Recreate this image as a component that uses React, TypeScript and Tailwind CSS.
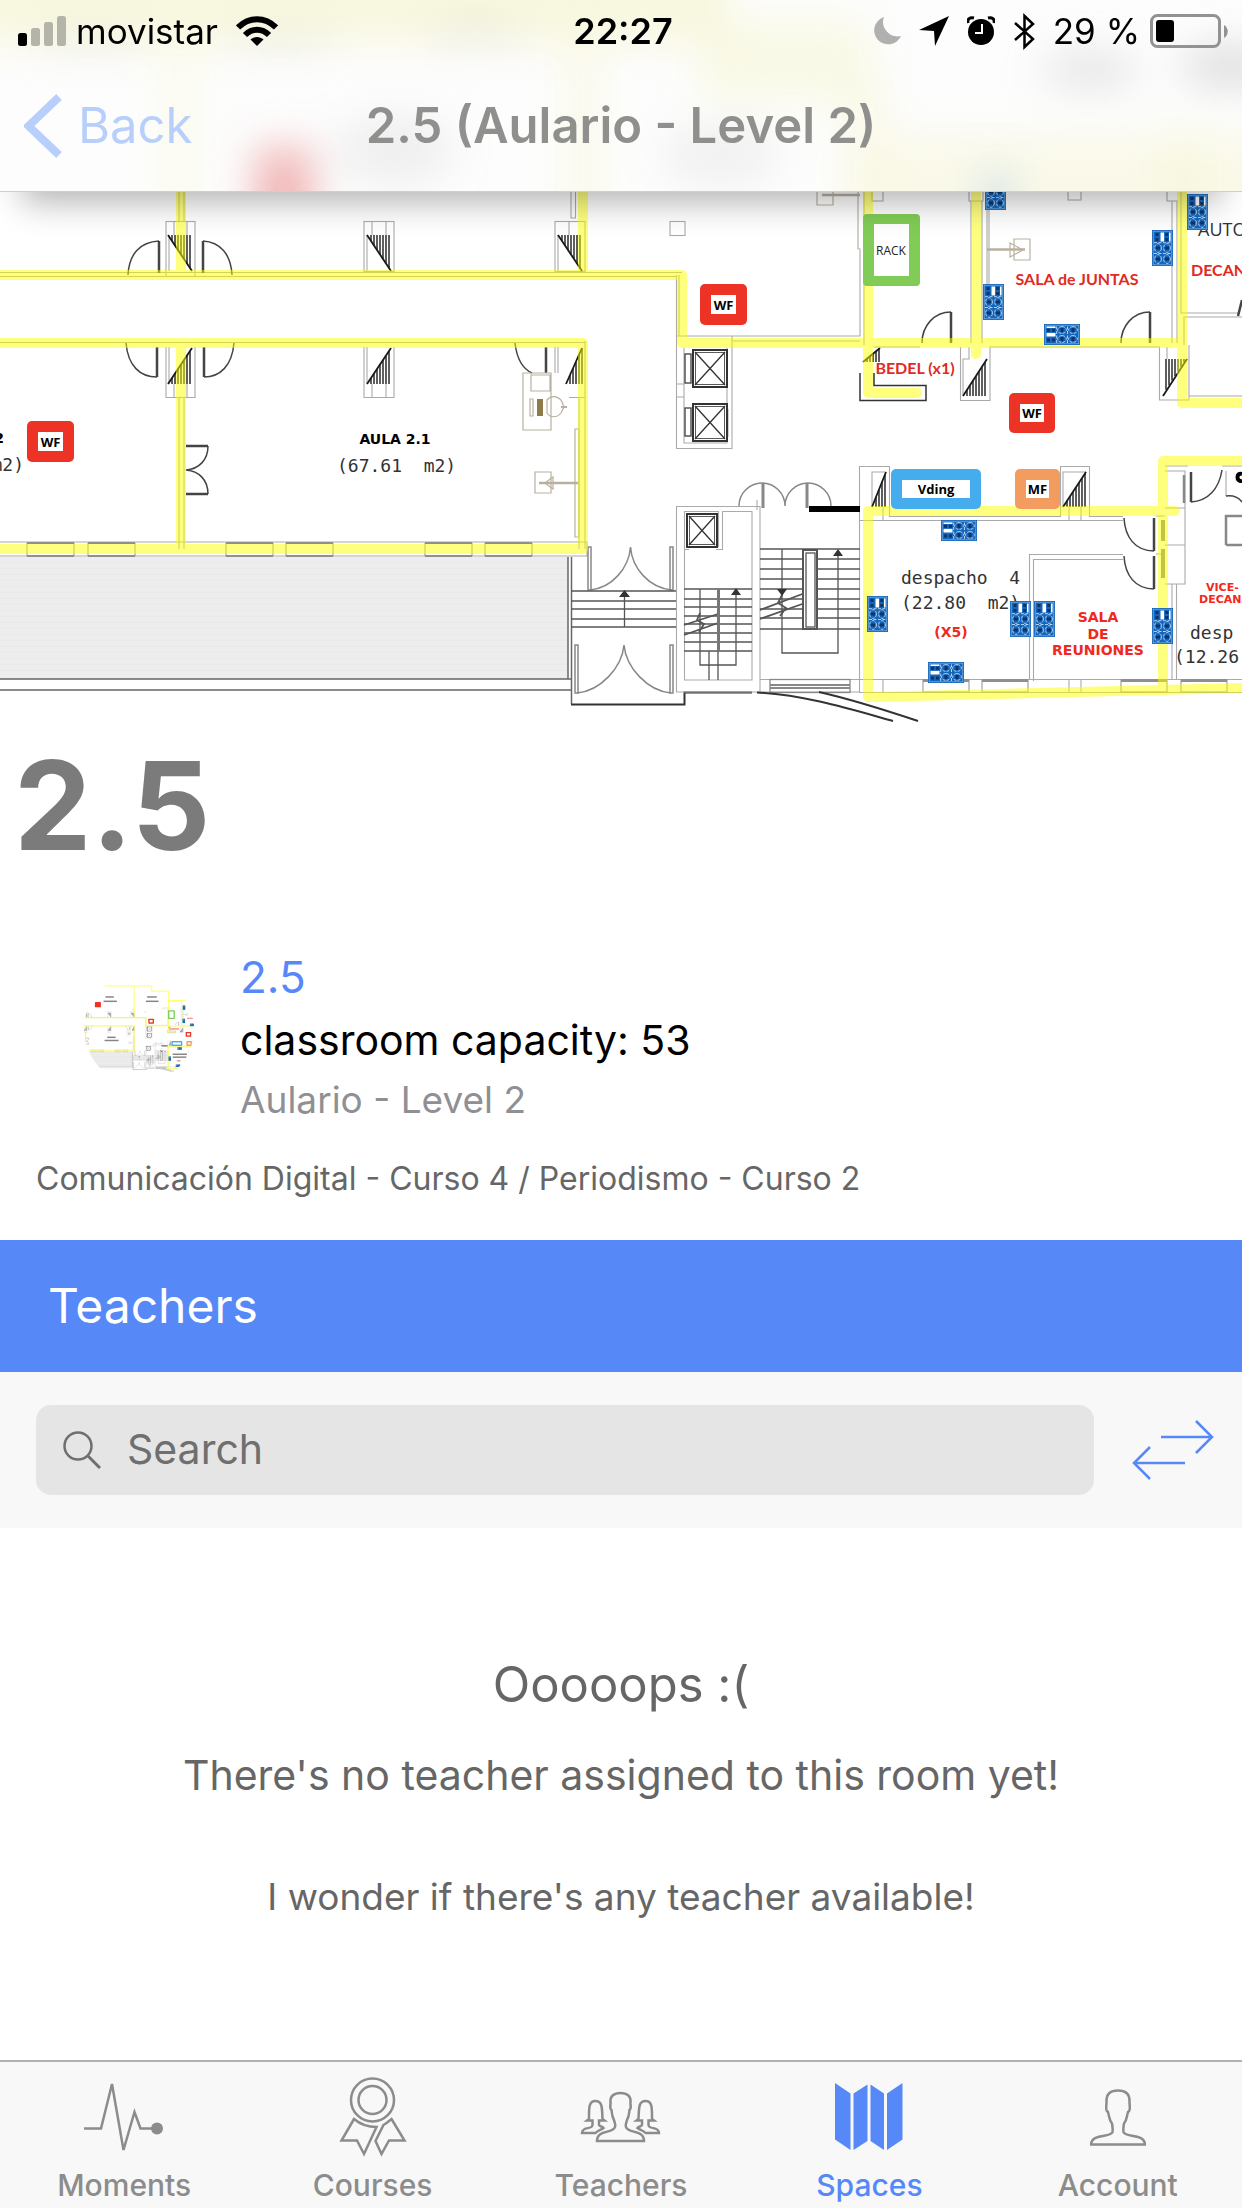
import type { ReactNode } from "react";

const YELLOW = "#ffff00";
const RED = "#ed3326";

type Point = { x: number; y: number };

/* Shaded triangular column; `dir` says where the stripes hang from and which way the diagonal runs. */
function Hatch({ x, y, w, h, dir }: Point & { w: number; h: number; dir: "top-right" | "bottom-right" | "top-left" }) {
  const steps = [4, 7, 10, 13, 16, 19, 22, 25].filter((s) => s <= w);
  return (
    <g stroke="#1a1a1a">
      {steps.map((s) => {
        const r = s / w;
        if (dir === "top-right") return <path key={s} strokeWidth="1.4" d={`M${x + s} ${y}V${y + h * r}`} />;
        if (dir === "bottom-right") return <path key={s} strokeWidth="1.4" d={`M${x + s} ${y + h}V${y + h * (1 - r)}`} />;
        return <path key={s} strokeWidth="1.4" d={`M${x + s - 1} ${y}V${y + h * (1 - r)}`} />;
      })}
      <path strokeWidth="1.8" d={dir === "top-right" ? `M${x} ${y}L${x + w} ${y + h}` : `M${x} ${y + h}L${x + w} ${y}`} />
    </g>
  );
}

/* Network socket cluster, 21 by 36 when upright. */
function Sockets({ x, y, flat = false }: Point & { flat?: boolean }) {
  return (
    <g transform={flat ? `translate(${x} ${y + 21}) rotate(-90)` : `translate(${x} ${y})`}>
      <rect width="21" height="36" fill="#1565ba" />
      <rect x="1.200" y="1.200" width="18.600" height="33.600" fill="none" stroke="#7fb4e6" strokeWidth="0.700" />
      <rect x="8.500" y="2.500" width="3.600" height="9" fill="#fff" />
      <rect x="17" y="2.500" width="1.600" height="9" fill="#fff" />
      <g fill="#0a3568">
        <rect x="3.500" y="3" width="3" height="3" />
        <rect x="3.500" y="8" width="3" height="3" />
        <rect x="13.200" y="3" width="3" height="3" />
        <rect x="13.200" y="8" width="3" height="3" />
        <rect x="4" y="16.500" width="4" height="3" />
        <rect x="13" y="16.500" width="4" height="3" />
        <rect x="4" y="27.500" width="4" height="3" />
        <rect x="13" y="27.500" width="4" height="3" />
      </g>
      <g fill="none" stroke="#c4def5" strokeWidth="0.900">
        <ellipse cx="6" cy="18" rx="3.400" ry="4.400" strokeDasharray="3 1.200" />
        <ellipse cx="15" cy="18" rx="3.400" ry="4.400" strokeDasharray="3 1.200" />
        <ellipse cx="6" cy="29" rx="3.400" ry="4.400" strokeDasharray="3 1.200" />
        <ellipse cx="15" cy="29" rx="3.400" ry="4.400" strokeDasharray="3 1.200" />
        <path d="M2 12.700H19M2 23.500H19" strokeDasharray="3 1.500" />
      </g>
    </g>
  );
}

function Tag({ x, y, w, h, color, label, labels }: Point & { w: number; h: number; color: string; label: string; labels: boolean }) {
  return (
    <g>
      <rect x={x} y={y} width={w} height={h} rx="5" fill={color} />
      <rect x={x + 11} y={y + 11} width={w - 22} height={h - 22} fill="#fff" />
      {labels && (
        <text x={x + w / 2} y={y + h / 2 + 5} textAnchor="middle" className="fill-black font-['Open_Sans',sans-serif] text-[13px] font-bold">
          {label}
        </text>
      )}
    </g>
  );
}

function Lift({ x, y, w, h }: Point & { w: number; h: number }) {
  return (
    <g fill="none" stroke="#333">
      <rect x={x} y={y} width={w} height={h} strokeWidth="2" />
      <rect x={x + 2.5} y={y + 2.5} width={w - 5} height={h - 5} strokeWidth="0.8" />
      <path strokeWidth="1.3" d={`M${x + 2} ${y + 2}L${x + w - 2} ${y + h - 2}M${x + w - 2} ${y + 2}L${x + 2} ${y + h - 2}`} />
    </g>
  );
}

const stair = (x1: number, x2: number, ys: number[]) => ys.map((y) => `M${x1} ${y}H${x2}`).join("");

function FloorPlan({ viewBox, className, labels = true }: { viewBox: string; className: string; labels?: boolean }) {
  return (
    <svg viewBox={viewBox} className={className} role="img" aria-label="Floor plan">
      {/* terrace */}
      <rect x="0" y="557" width="568" height="122" fill="#ededed" />
      <path d={stair(0, 568, [562, 568, 574, 580, 586, 592, 598, 604, 610, 616, 622, 628, 634, 640, 646, 652, 658, 664, 670])} stroke="#e8e8e8" />
      <g fill="none" stroke="#666" strokeWidth="1.5">
        <path d="M568 557V679M571.500 557V704M0 679H571M0 690H571" />
        <path d="M571 704.500H684.500V692.500H752" stroke="#333" strokeWidth="2" />
      </g>

      {/* walls */}
      <g fill="none" stroke="#aaa" strokeWidth="1.1">
        <path d="M0 272.500H682M0 276.500H676M179 12V221M184 12V221M0 342.500H585M179 397V549M184 397V549M579 397V549M585 341V549M0 542H587V556H0" />
        <rect x="166" y="221.500" width="29" height="55" />
        <path d="M174 221V235M187 221V235M169 235V271M372 221V235M386 221V235M367 235V271M569 221V235M558 235V271" />
        <rect x="364" y="221.500" width="30" height="50" />
        <rect x="555" y="221.500" width="30" height="50" />
        <path d="M166 347V397.500H195V347M169 347V384M174 384V397M187 384V397M364 347V397.500H394V347M367 347V384M372 384V397M386 384V397M555 347V373M558 347V373M569 397.500H585" />
        <path d="M575.500 192V218H571V192M676.500 275V448.500H732V336M676 336H860V250M679 275V336M732 341H860M676 384H684M676 397H684M684 348V443H727M727 348V443M732 353V381M728 409V437" />
        <rect x="670" y="221.500" width="15" height="14" />
        <path d="M864 192V345M872 192V201H883V192M969 192V201H983V192M971 201V343M982 201V343M1068 192V200H1081V192M1167 192V201H1178M1172 201V343M1177 201V343M920 347H874M960.500 347V400.500H990V347H1159.500V400H1189V345M969 347V359H963V396M1167 347V359M1181 192V313H1238M1242 317H1184V345M1189 396H1242M989 200V284" />
        <path d="M859.500 692V466.500H889.500V516.500H1060.500V466.500H1089.500V516.500H1123M859 520.500H1123M872 507V472H886M883 507V520M1063 507V472H1086M1069 507V520M1081 507V520M1029.500 679V554.500H1123M1033.500 681V559.500H1123M859 679.500H1242M859 692.500H1242M883 679V692M1069 679V692M1081 679V692M1156 516H1165M1156 554H1165" />
        <path d="M1165 466H1188M1165 471H1185V584H1165M1165 508H1185M1165 545H1185M1172 584V679M1176.500 584V679M1222 466H1242M1226 471V496" />
        <path d="M676.500 692V506.500H760V692ZM684.500 549V680H752V511.500H722.500V549.500H716M684 549.500H689M684.500 549V511.500H718.500V547M760 692H860M760 679.500H860M757 500V510" />
      </g>
      <g fill="none" stroke="#888" strokeWidth="1.3">
        <path d="M1226 545H1242M1226 545V516H1242M1184 475V503" strokeWidth="2.500" />
        <path d="M1163 520V541M1163 549V578" strokeWidth="4" />
        <rect x="770" y="679.500" width="80" height="13" />
        <path d="M770 685H850M770 688H850" strokeWidth="2" />
      </g>

      {/* windows */}
      {[27, 88, 226, 286, 425, 485].map((x) => (
        <g key={x} stroke="#8f8f8f" strokeWidth="2">
          <path d={`M${x} 543H${x + 47}M${x} 556H${x + 47}`} />
          <path d={`M${x} 543V556M${x + 47} 543V556`} strokeWidth="1" />
        </g>
      ))}
      {[923, 982, 1121, 1181].map((x) => (
        <g key={x} fill="none" stroke="#8f8f8f">
          <rect x={x} y="680" width="46" height="12" />
          <path d={`M${x} 680.500H${x + 46}`} strokeWidth="3" />
        </g>
      ))}

      {/* doors */}
      <g fill="none" stroke="#444" strokeWidth="1.500">
        <path d="M128 275C129 254 140 242 159 241M232 275C231 254 220 242 203 241M126 343C128 366 140 377 157 377M234 343C232 366 220 377 204 377M515 343C517 360 523 369 532 373" />
        <path d="M159 241V273M203 241V273M157 347V377M204 347V377M546 347V373" strokeWidth="2.500" />
        <path d="M208 446C208 460 199 469 186 470C199 471 208 480 208 494M922 343C922 326 934 312 951 312M1121 343C1121 326 1133 312 1150 312M1124 518C1125 537 1135 551 1154 551M1124 556C1125 575 1135 589 1154 589M1222 470C1219 489 1208 501 1191 502M1226 496C1234 495 1239 498 1242 502" />
        <path d="M186 446H208M186 494H208M951 312V343M1150 312V343M1154 518V551M1154 556V589M1191 472V502M1238 316L1242 300" strokeWidth="2.500" />
        <g stroke="#888">
          <path d="M739 506A23 23 0 0 1 785 506A23 23 0 0 1 831 506" />
          <path d="M763 483V508M807 483V508" strokeWidth="3" />
          <path d="M590 590C612 588 629 568 630.500 547C632 568 649 588 672 590M577 693C600 691 622 668 624 645C626 668 648 691 671 693" />
          <path d="M588 547H591V590H588ZM670 547H673V590H670ZM575 645H578V693H575ZM670 645H673V693H670Z" />
        </g>
      </g>

      {/* stairs */}
      <g fill="none" stroke="#555" strokeWidth="1.300">
        <path d={stair(571, 676, [591, 601, 609, 619, 627])} />
        <path d={stair(684, 752, [589, 599, 607, 616, 624, 633, 642, 651])} />
        <path d={stair(760, 860, [549, 559, 569, 579, 589, 599, 609, 618, 629])} />
        <path d="M709 651V680M718 651V680M624.500 627V594M700 589V665H736V594M782 549V653H838V554" />
        <path d="M684 625L718 614M684 635L718 623M760 610L805 593M760 619L805 603M700 613L697 620L704 624L699 632M782 595L778 603L786 608L780 616" strokeWidth="1.800" />
        <rect x="803" y="550" width="14" height="79" fill="#fff" strokeWidth="2" />
        <rect x="806" y="553" width="9" height="74" />
        <path d="M718.500 589V651" stroke="#777" strokeWidth="3" />
      </g>
      <path d="M624.500 590L619 597H630ZM736 588L731 595H741ZM838 549L833 556H843ZM782 596L777 589H787Z" fill="#333" />
      <rect x="809" y="506" width="51" height="6" fill="#000" />
      <g fill="none" stroke="#333" strokeWidth="2">
        <path d="M757 692.500C805 695 850 709 893 721M819 692C850 699 885 710 918 721" />
      </g>

      <Lift x={693} y={350} w={34} h={37} />
      <Lift x={693} y={404} w={34} h={37} />
      <Lift x={687} y={514} w={30} h={33} />
      <path d="M685 354H691V383H685ZM685 408H691V436H685Z" fill="none" stroke="#555" strokeWidth="1.500" />

      {/* furniture */}
      <g fill="none" stroke="#b9b1a0" strokeWidth="1.200">
        <path d="M523 373H551V430H523ZM531 375H550V391H531ZM530 399H533V416H530ZM575 429H579V537H575ZM535 472H551V493H535ZM1014 239H1030V260H1014ZM1010 243V257L1023 250ZM817 192V205H833V192M858 192V249H861M987 200V284" />
        <path d="M539 483H578M987 249.500H1025M822 195H860" strokeWidth="2.500" />
        <path d="M545 483L553 477V489ZM547 400C552 394 560 397 562 402L564 407L561 413C557 418 550 418 547 413Z" />
        <path d="M561 407H567" strokeWidth="2" />
      </g>
      <rect x="537" y="399" width="6" height="17" fill="#8f7a4c" />

      <Hatch x={168} y={235} w={24} h={36} dir="top-right" />
      <Hatch x={367} y={235} w={24} h={36} dir="top-right" />
      <Hatch x={558} y={235} w={24} h={36} dir="top-right" />
      <Hatch x={168} y={348} w={24} h={36} dir="bottom-right" />
      <Hatch x={367} y={348} w={24} h={36} dir="bottom-right" />
      <Hatch x={566} y={348} w={16} h={36} dir="bottom-right" />
      <Hatch x={963} y={359} w={24} h={37} dir="bottom-right" />
      <Hatch x={1163} y={359} w={24} h={37} dir="top-left" />
      <Hatch x={863} y={348} w={17} h={14} dir="bottom-right" />
      <Hatch x={872} y={472} w={14} h={35} dir="bottom-right" />
      <Hatch x={1063} y={472} w={23} h={35} dir="bottom-right" />

      {/* highlighted cable routes */}
      <g fill="none" stroke={YELLOW} strokeWidth="10" strokeLinejoin="round" strokeLinecap="round" opacity="0.5">
        <path d="M-40 12H728V55H868V135H1282M181 12V275M583 12V275M-40 275H682V343H1182M868 55V393H917M976 135V354M1182 135V403H1282" />
        <path d="M-40 343H583V549H-40M181 343V549" />
        <path d="M868 511H1175M868 511V697L1282 687M1163 690V461H1282" />
      </g>
      <path d="M860 373V400.500H926V385.500H874V373" fill="none" stroke="#333" strokeWidth="1.500" />

      {/* upper rooms */}
      <rect x="258" y="146" width="50" height="44" rx="5" fill={RED} />

      <Tag x={27} y={421} w={47} h={41} color={RED} label="WF" labels={labels} />
      <Tag x={700} y={284} w={47} h={41} color={RED} label="WF" labels={labels} />
      <Tag x={1009} y={393} w={46} h={40} color={RED} label="WF" labels={labels} />
      <Tag x={891} y={469} w={90} h={40} color="#45adee" label="Vding" labels={labels} />
      <Tag x={1015} y={469} w={45} h={40} color="#f39c60" label="MF" labels={labels} />
      <rect x="863" y="214" width="57" height="72" rx="4" fill="#81cc56" />
      <rect x="874" y="224" width="35" height="52" fill="#fff" />

      {labels ? (
        <g>
          <g className="fill-[#333] font-['DejaVu_Sans_Mono',monospace] text-[18px]">
            <text x="337" y="472">{"(67.61\u00a0\u00a0m2)"}</text>
            <text x="24" y="471" textAnchor="end">{"m2)"}</text>
            <text x="901" y="584">{"despacho\u00a0\u00a04"}</text>
            <text x="901" y="609">{"(22.80\u00a0\u00a0m2)"}</text>
            <text x="1190" y="639">desp</text>
            <text x="1174" y="663">(12.26</text>
          </g>
          <g className="fill-black font-['DejaVu_Sans',sans-serif] text-[14px] font-bold">
            <text x="395" y="444" textAnchor="middle">AULA 2.1</text>
            <text x="4" y="443" textAnchor="end">2</text>
          </g>
          <text x="891" y="255" textAnchor="middle" className="fill-[#222] font-['Open_Sans',sans-serif] text-[12px]">RACK</text>
          <text x="1198" y="236" className="fill-[#333] font-['Open_Sans',sans-serif] text-[18px]">AUTO</text>
          <g className="fill-[#e12a22] font-[Lato,sans-serif] text-[16px] font-bold">
            <text x="1077" y="285" textAnchor="middle">SALA de JUNTAS</text>
            <text x="915" y="374" textAnchor="middle">BEDEL (x1)</text>
            <text x="1191" y="276">DECANO</text>
          </g>
          <g className="fill-[#f0281e] font-['DejaVu_Sans',sans-serif] text-[14px] font-bold" textAnchor="middle">
            <text x="951" y="637">(X5)</text>
            <text x="1098" y="622">SALA</text>
            <text x="1098" y="639">DE</text>
            <text x="1098" y="655">REUNIONES</text>
          </g>
          <g className="fill-[#f0281e] font-['DejaVu_Sans',sans-serif] text-[11px] font-bold">
            <text x="1206" y="591">VICE-</text>
            <text x="1199" y="603">DECANA</text>
          </g>
        </g>
      ) : (
        <g fill="#333" opacity="0.600">
          <rect x="360" y="432" width="70" height="12" />
          <rect x="338" y="458" width="116" height="12" />
          <rect x="902" y="572" width="118" height="12" />
          <rect x="902" y="596" width="118" height="12" />
          <rect x="345" y="98" width="70" height="12" />
          <rect x="330" y="134" width="110" height="12" />
          <rect x="690" y="98" width="80" height="12" />
          <rect x="680" y="134" width="105" height="12" />
          <rect x="1020" y="276" width="116" height="9" fill={RED} />
          <rect x="876" y="363" width="77" height="11" fill={RED} />
          <rect x="936" y="627" width="30" height="10" fill={RED} />
        </g>
      )}

      <Sockets x={985} y={174} />
      <Sockets x={983} y={284} />
      <Sockets x={1152} y={230} />
      <Sockets x={1187} y={194} />
      <Sockets x={1044} y={324} flat />
      <Sockets x={867} y={596} />
      <Sockets x={1010} y={601} />
      <Sockets x={1034} y={601} />
      <Sockets x={1152} y={608} />
      <Sockets x={941} y={520} flat />
      <Sockets x={928} y={662} flat />
      <path d="M1242 474C1236 472 1236 482 1242 481" fill="none" stroke="#000" strokeWidth="4" />
    </svg>
  );
}

/* Frosted glass tint of the navigation bar. */
function FrostedBackdrop() {
  return (
    <svg viewBox="0 0 1242 191" preserveAspectRatio="none" className="absolute inset-0 -z-10 size-full" aria-hidden="true">
      <defs>
        <filter id="frost" filterUnits="userSpaceOnUse" x="-150" y="-150" width="1542" height="500" colorInterpolationFilters="sRGB">
          <feGaussianBlur stdDeviation="20" />
        </filter>
      </defs>
      <rect width="1242" height="191" fill="#fdfdfd" />
      <g filter="url(#frost)">
        <g fill="#f6f5d0">
          <rect x="-80" y="-80" width="808" height="122" opacity="0.650" />
          <rect x="165" y="20" width="32" height="240" opacity="0.350" />
          <rect x="567" y="20" width="32" height="240" opacity="0.450" />
          <rect x="700" y="20" width="170" height="80" opacity="0.500" />
          <rect x="845" y="80" width="40" height="180" opacity="0.450" />
          <rect x="870" y="135" width="450" height="110" opacity="0.450" />
          <rect x="1165" y="130" width="40" height="120" opacity="0.400" />
        </g>
        <g fill="#999">
          <ellipse cx="90" cy="40" rx="55" ry="12" opacity="0.120" />
          <ellipse cx="280" cy="40" rx="55" ry="12" opacity="0.120" />
          <ellipse cx="475" cy="30" rx="50" ry="14" opacity="0.120" />
          <ellipse cx="395" cy="150" rx="60" ry="36" opacity="0.140" />
          <ellipse cx="720" cy="155" rx="60" ry="30" opacity="0.130" />
          <ellipse cx="1090" cy="70" rx="50" ry="16" opacity="0.280" />
          <ellipse cx="1230" cy="66" rx="50" ry="20" opacity="0.320" />
        </g>
        <rect x="256" y="148" width="56" height="90" fill="#e98f8f" opacity="0.660" />
        <rect x="985" y="172" width="24" height="60" fill="#8dbbe0" opacity="0.450" />
      </g>
    </svg>
  );
}

function StatusBar() {
  return (
    <div className="grid h-[62px] grid-cols-[1fr_auto_1fr] items-center pr-[14px] pl-[18px] text-[35px] text-black">
      <div className="flex items-center gap-[10px]">
        <svg viewBox="18 15 48 30" className="h-[30px] w-12" aria-label="Signal">
          <rect x="18" y="32" width="9" height="13" rx="2.500" />
          <g fill="#b4b5a8">
            <rect x="31" y="27" width="9" height="18" rx="2.500" />
            <rect x="44" y="21" width="9" height="24" rx="2.500" />
            <rect x="57" y="15" width="9" height="30" rx="2.500" />
          </g>
        </svg>
        <span>movistar</span>
        <svg viewBox="237 15 42 30" className="ml-2 h-[30px] w-[42px]" aria-label="Wi-Fi">
          <g fill="none" stroke="#000" strokeWidth="6">
            <path d="M239 26.500C250 15.500 266 15.500 277 26.500" />
            <path d="M246 34C253 27 263 27 270 34" />
          </g>
          <path d="M251.500 38.500C255 35 261 35 264.500 38.500L258 45Z" />
        </svg>
      </div>
      <span className="text-4xl font-semibold">22:27</span>
      <div className="flex items-center justify-end gap-[18px]">
        <svg viewBox="873 16 27 28" className="h-7 w-[27px]" aria-label="Do not disturb">
          <path d="M883 16A14 14 0 1 0 900 35A14.500 14.500 0 0 1 883 16Z" fill="#b0b0b0" />
        </svg>
        <svg viewBox="918 16 30 30" className="h-[30px] w-[30px]" aria-label="Location">
          <path d="M948 16L934 46L933 31L918 30Z" />
        </svg>
        <svg viewBox="968 15 28 30" className="h-[30px] w-7" aria-label="Alarm">
          <circle cx="982" cy="31" r="13" />
          <path d="M983 23V32H976" fill="none" stroke="#fff" strokeWidth="2" />
          <path d="M969 22C968 18 971 16 975 17M995 22C996 18 993 16 989 17" fill="none" stroke="#000" strokeWidth="3" />
        </svg>
        <svg viewBox="1013 12 22 37" className="h-[37px] w-[22px]" aria-label="Bluetooth">
          <path d="M1015 22L1033 38L1024.500 46V15L1033 23L1015 39" fill="none" stroke="#000" strokeWidth="2.500" />
        </svg>
        <div className="flex items-center gap-[10px]">
          <span>29 %</span>
          <svg viewBox="1149 13 78 34" className="h-[34px] w-[78px]" aria-label="Battery">
            <rect x="1150.500" y="14.500" width="68" height="31" rx="6" fill="none" stroke="#929292" strokeWidth="3" />
            <rect x="1155" y="19" width="18" height="22" rx="3" />
            <path d="M1223 24C1228 27 1228 34 1223 37Z" fill="#929292" />
          </svg>
        </div>
      </div>
    </div>
  );
}

const personHalf = "M1090 94.500C1091 83 1110 88 1111.500 82C1112 78 1111.500 77 1111 73.500C1108 70 1108.500 67 1107 62C1104 61 1105.500 56 1105.500 52C1105 43.500 1110 40.500 1117 40.500";

function Person() {
  return (
    <g fill="none" stroke="currentColor" strokeWidth="2.500">
      <path d={personHalf} />
      <path d={personHalf} transform="translate(2234 0) scale(-1 1)" />
      <path d="M1089 94.500H1145" />
    </g>
  );
}

const womanPath =
  "M589 69C589 58 588.500 51 595.500 51C602.500 51 602 58 602.500 69L604.500 70.500H599V75C600 77 602 76 603.500 78C601 80 598 80 595.500 83H582C582 76 592 80 592.500 75V70.500H587Z";

const tabs: { name: string; active?: boolean; icon: ReactNode }[] = [
  {
    name: "Moments",
    icon: (
      <svg viewBox="84 27 80 80" className="size-20" aria-hidden="true">
        <path d="M84 78.500H101L112 34L123.500 100L134.500 62L140.500 78.500H152" fill="none" stroke="currentColor" strokeWidth="2.500" />
        <circle cx="157" cy="78.500" r="6" fill="currentColor" />
      </svg>
    ),
  },
  {
    name: "Courses",
    icon: (
      <svg viewBox="332 27 80 80" className="size-20" aria-hidden="true">
        <g fill="none" stroke="currentColor" strokeWidth="2.500">
          <circle cx="371.500" cy="50" r="21.500" />
          <circle cx="371.500" cy="50" r="14" />
          <path d="M353 69L340.500 90.500H356L363 104L375.500 77C366 77 359 74 353 69ZM390.500 69L403.500 90.500H388L380.500 104L374.500 91L382.500 75C386 73 388 71 390.500 69Z" />
        </g>
      </svg>
    ),
  },
  {
    name: "Teachers",
    icon: (
      <svg viewBox="580 27 82 80" className="h-20 w-[82px]" aria-hidden="true">
        <g fill="none" stroke="currentColor" strokeWidth="2.500">
          <path d={womanPath} />
          <path d={womanPath} transform="translate(1241 0) scale(-1 1)" />
        </g>
        <g className="fill-[#f8f8f8]" stroke="currentColor" strokeWidth="2.500">
          <path d="M597 91C597 79 613 84 615 77C616 74 614.500 73 614 70C612 67 612 64 611.500 60C609 58 611 55 610.500 52C610 46 614 43 620.500 43C627 43 631 46 630.500 52C630 55 632 58 629.500 60C629 64 629 67 627 70C626.500 73 625 74 626 77C628 84 644 79 644 91Z" />
        </g>
      </svg>
    ),
  },
  {
    name: "Spaces",
    active: true,
    icon: (
      <svg viewBox="829 27 80 80" className="size-20" aria-hidden="true">
        <path
          fill="currentColor"
          d="M835 33L850.500 43.500V100L835 89.500ZM853.500 43.500L867.500 34.500V91L853.500 100ZM870.500 34.500L884 43.500V100L870.500 91ZM887 43.500L902.500 33V89.500L887 100Z"
        />
      </svg>
    ),
  },
  {
    name: "Account",
    icon: (
      <svg viewBox="1077 27 80 80" className="size-20" aria-hidden="true">
        <Person />
      </svg>
    ),
  },
];

export default function App() {
  return (
    <div className="flex min-h-screen flex-col bg-white font-[Inter,sans-serif] text-[#666]">
      <header className="sticky top-0 isolate z-10 h-48 border-b border-[#cfcfcb] shadow-[0_32px_32px_-22px_rgba(0,0,0,0.3)]">
        <FrostedBackdrop />
        <StatusBar />
        <div className="grid grid-cols-[1fr_auto_1fr] items-center px-6 pt-[26px] text-[49px] leading-[76px]">
          <button type="button" className="flex items-center gap-4 justify-self-start text-[#b9cffb]">
            <svg viewBox="24 91 38 64" className="h-16 w-[38px]" aria-hidden="true">
              <path d="M59 94L28.500 123L59 152" fill="none" stroke="currentColor" strokeWidth="8" />
            </svg>
            <span>Back</span>
          </button>
          <span className="font-semibold text-[#8f8f8d]">2.5 (Aulario - Level 2)</span>
        </div>
      </header>

      <main>
        <FloorPlan viewBox="0 0 1242 726" className="-mt-48 block w-full" />

        <h1 className="px-[14px] text-[123px] leading-[160px] font-bold text-[#7b7b7b]">2.5</h1>

        <section className="flex items-center gap-[46px] pt-[58px] pl-21">
          <div className="mb-4 size-[110px] overflow-hidden rounded-full">
            <FloorPlan viewBox="168 -86 910 910" className="size-full" labels={false} />
          </div>
          <div>
            <h2 className="text-[44px] leading-[66px] text-[#5788f7]">2.5</h2>
            <p className="text-[41px] leading-[60px] text-black">classroom capacity: 53</p>
            <p className="text-[37px] leading-[60px] text-[#8f8f94]">Aulario - Level 2</p>
          </div>
        </section>
        <p className="px-9 pt-[19px] pb-[31px] text-[32px] leading-[60px]">Comunicación Digital - Curso 4 / Periodismo - Curso 2</p>

        <h2 className="bg-[#5788f7] px-12 text-[48px] leading-[132px] text-white">Teachers</h2>

        <div className="flex items-center gap-[38px] bg-[#f8f8f8] py-[33px] pr-7 pl-9">
          <label className="flex h-[90px] flex-1 items-center gap-[26px] rounded-[15px] bg-[#e5e5e5] px-[27px] text-[#6f6f6f]">
            <svg viewBox="0 0 38 38" className="size-[38px]" aria-hidden="true">
              <circle cx="15" cy="15" r="13.500" fill="none" stroke="currentColor" strokeWidth="2.500" />
              <path d="M25 25L37 37" stroke="currentColor" strokeWidth="3" />
            </svg>
            <input
              type="search"
              aria-label="Search"
              placeholder="Search"
              className="min-w-0 flex-1 bg-transparent text-[41px] outline-none placeholder:text-[#6f6f6f]"
            />
          </label>
          <button type="button" aria-label="Swap" className="text-[#5788f7]">
            <svg viewBox="1133 1421 82 60" className="h-[60px] w-[82px]">
              <path
                d="M1162 1438H1213M1197 1422L1213 1438L1197 1454M1186 1464H1135M1151 1448L1135 1464L1151 1480"
                fill="none"
                stroke="currentColor"
                strokeWidth="2.500"
              />
            </svg>
          </button>
        </div>

        <section className="px-9 pt-28 pb-19 text-center">
          <h2 className="text-[49px] leading-[90px]">Ooooops :(</h2>
          <p className="text-[41px] leading-[90px]">There's no teacher assigned to this room yet!</p>
          <p className="pt-8 text-[37px] leading-[90px]">I wonder if there's any teacher available!</p>
        </section>
      </main>

      <nav className="sticky bottom-0 mt-auto grid h-37 grid-cols-5 border-t-2 border-[#b2b2b2] bg-[#f8f8f8]">
        {tabs.map((tab) => (
          <a
            key={tab.name}
            href={`#${tab.name.toLowerCase()}`}
            className={tab.active ? "flex flex-col items-center pt-[15px] text-[#5788f7]" : "flex flex-col items-center pt-[15px] text-[#8c8c8c]"}
          >
            {tab.icon}
            <span className="pt-[10px] text-[30px] leading-9 font-medium">{tab.name}</span>
          </a>
        ))}
      </nav>
    </div>
  );
}
